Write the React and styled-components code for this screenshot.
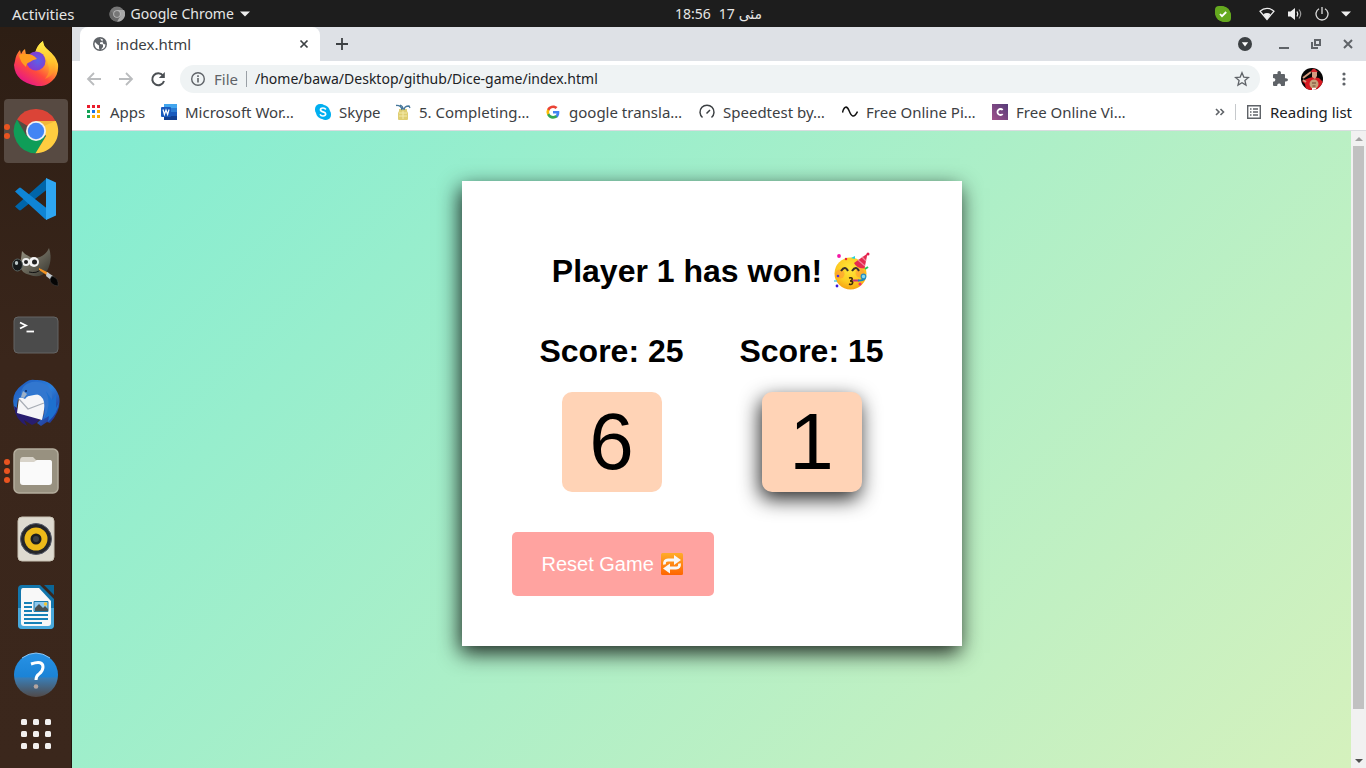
import React from "react";
import styled, { createGlobalStyle } from "styled-components";

const GlobalStyle = createGlobalStyle`
  * { box-sizing: border-box; }
  body { margin: 0; }
  button, input { font: inherit; color: inherit; margin: 0; }
`;

const uiFont = `"Noto Sans", "DejaVu Sans", sans-serif`;

const Desktop = styled.div`
  height: 100vh;
  display: flex;
  flex-direction: column;
  overflow: hidden;
  font-family: ${uiFont};
  font-size: 14px;
  line-height: 20px;
`;

/* ---------- system bar ---------- */
const SystemBar = styled.header`
  flex: none;
  height: 27px;
  display: grid;
  grid-template-columns: 1fr auto 1fr;
  align-items: center;
  padding: 0 15px 0 12px;
  background: #1d1d1d;
  color: #e6e6e6;
`;
const SystemGroup = styled.div`
  display: flex;
  align-items: center;
  justify-content: ${(p) => (p.$end ? "flex-end" : "flex-start")};
  gap: ${(p) => p.$gap}px;
`;
const PlainButton = styled.button`
  display: flex;
  align-items: center;
  justify-content: center;
  gap: ${(p) => p.$gap || 0}px;
  padding: 0;
  border: 0;
  background: none;
  flex: none;
`;
const ActivitiesButton = styled(PlainButton)`
  font-size: 15px;
`;
const Clock = styled.time`
  display: flex;
  gap: 8px;
  padding-left: 74px;
`;
const DateText = styled.span`
  display: flex;
  gap: 4px;
`;

/* ---------- dock ---------- */
const Workspace = styled.div`
  flex: 1;
  min-height: 0;
  display: flex;
`;
const Dock = styled.nav`
  flex: none;
  width: 72px;
  display: flex;
  flex-direction: column;
  align-items: center;
  gap: 4px;
  padding-top: 4px;
  background: linear-gradient(#2d1e14, #3a261b 45%, #3b271c);
  border-right: 1px solid #21150e;
`;
const DockItem = styled.button`
  position: relative;
  flex: none;
  width: 64px;
  height: ${(p) => (p.$short ? 46 : 64)}px;
  display: flex;
  align-items: center;
  justify-content: center;
  padding: 0;
  border: 0;
  border-radius: 4px;
  background: ${(p) => (p.$active ? "#574a42" : "none")};
`;
const RunningDots = styled.span`
  position: absolute;
  left: 0;
  top: 0;
  height: 100%;
  display: flex;
  flex-direction: column;
  justify-content: center;
  gap: 3px;
`;
const RunningDot = styled.i`
  width: 6px;
  height: 6px;
  border-radius: 50%;
  background: #e95420;
`;

/* ---------- browser ---------- */
const Browser = styled.div`
  flex: 1;
  min-width: 0;
  display: flex;
  flex-direction: column;
  background: #fff;
  color: #3c4043;
`;
const TabStrip = styled.div`
  flex: none;
  height: 34px;
  display: flex;
  align-items: stretch;
  padding: 0 10px 0 8px;
  background: #dee1e6;
`;
const Tab = styled.div`
  width: 240px;
  display: flex;
  align-items: center;
  gap: 8px;
  padding: 0 8px 0 12px;
  background: #fff;
  border-radius: 8px 8px 0 0;
  font-size: 15px;
`;
const TabTitle = styled.span`
  flex: 1;
`;
const NewTab = styled(PlainButton)`
  width: 44px;
`;
const WindowControls = styled.div`
  margin-left: auto;
  display: flex;
  align-items: center;
  gap: 16px;
`;
const TabSearchButton = styled(PlainButton)`
  padding-right: 8px;
`;
const Toolbar = styled.div`
  flex: none;
  height: 36px;
  display: flex;
  align-items: center;
  gap: 12px;
  padding: 0 14px 0 12px;
`;
const ToolbarActions = styled.div`
  display: flex;
  align-items: center;
  gap: 13px;
`;
const Omnibox = styled.div`
  flex: 1;
  height: 28px;
  display: flex;
  align-items: center;
  gap: 8px;
  padding: 0 10px;
  border-radius: 14px;
  background: #eff3f4;
`;
const Scheme = styled.label`
  padding-right: 8px;
  border-right: 1px solid #9aa0a6;
  font-size: 15px;
  line-height: 16px;
  color: #5f6368;
`;
const AddressInput = styled.input`
  flex: 1;
  min-width: 0;
  padding: 0;
  border: 0;
  outline: 0;
  background: none;
  color: #202124;
`;
const Bookmarks = styled.div`
  flex: none;
  height: 34px;
  display: flex;
  align-items: center;
  gap: 16px;
  padding: 0 14px 4px;
  border-bottom: 1px solid #dadce0;
  font-size: 15px;
`;
const Bookmark = styled.a`
  display: flex;
  align-items: center;
  gap: 8px;
  color: inherit;
  text-decoration: none;
  white-space: nowrap;
`;
const BookmarkLabel = styled.span`
  width: ${(p) => p.$w}px;
`;
const BookmarkEnd = styled.div`
  margin-left: auto;
  display: flex;
  align-items: center;
  gap: 10px;
`;
const ReadingList = styled(PlainButton)`
  padding-left: 10px;
  border-left: 1px solid #c6c9cc;
  line-height: 16px;
  color: #202124;
  white-space: nowrap;
`;

/* ---------- page ---------- */
const Viewport = styled.div`
  flex: 1;
  min-height: 0;
  display: flex;
`;
const Page = styled.main`
  flex: 1;
  min-width: 0;
  overflow: hidden;
  padding: 50px 20px;
  background: linear-gradient(135deg, #84edd2, #d5f1bd);
  color: #000;
  font-family: "Liberation Sans", Arial, sans-serif;
`;
const Card = styled.section`
  max-width: 500px;
  margin: 0 auto;
  padding: 50px;
  background: #fff;
  box-shadow: -2px 7px 20px rgba(0, 0, 0, 0.85);
`;
const Message = styled.h1`
  display: flex;
  justify-content: center;
  align-items: center;
  gap: 9px;
  margin: 20px 0 40px;
  font-size: 32px;
  line-height: 40px;
`;
const Players = styled.div`
  display: flex;
`;
const Player = styled.div`
  width: 200px;
  display: flex;
  flex-direction: column;
  align-items: center;
  gap: 21px;
`;
const Score = styled.h2`
  margin: 0;
  font-size: 32px;
  line-height: 40px;
`;
const Die = styled.div`
  width: 100px;
  height: 100px;
  border-radius: 10px;
  background: #ffd3b6;
  font-size: 80px;
  line-height: 100px;
  text-align: center;
  box-shadow: ${(p) => (p.$active ? "-2px 7px 20px rgba(0, 0, 0, 0.85)" : "none")};
`;
const ResetButton = styled.button`
  display: flex;
  align-items: center;
  gap: 6px;
  margin-top: 40px;
  padding: 20px 30px;
  border: 0;
  border-radius: 5px;
  background: #ffa3a0;
  color: #fff;
  font-size: 20px;
  line-height: 24px;
`;
const ScrollTrack = styled.div`
  flex: none;
  width: 15px;
  display: flex;
  flex-direction: column;
  background: #f1f1f1;
`;
const ScrollArrow = styled(PlainButton)`
  height: 15px;
`;
const ScrollThumb = styled.div`
  flex: 563;
  margin: 0 2px;
  background: #c1c1c1;
`;
const ScrollRest = styled.div`
  flex: 44;
`;

/* ---------- drawings ---------- */
const Svg = ({ w = 16, h = w, box, children }) => (
  <svg width={w} height={h} viewBox={box || `0 0 ${w} ${h}`} fill="none" aria-hidden="true">
    {children}
  </svg>
);

const Caret = () => (
  <Svg w={10} h={6}><path d="M0 0.5h10L5 5.5z" fill="#eee" /></Svg>
);
const GreyChrome = () => (
  <Svg w={16}>
    <circle cx="8" cy="8" r="7.6" fill="#777" />
    <path d="M8 4h7A7.6 7.6 0 0 1 8 15.6L11.5 10z" fill="#aaa" />
    <path d="M1.4 4.4A7.6 7.6 0 0 0 8 15.6L11 10 5 9z" fill="#686868" />
    <circle cx="8" cy="8" r="3.8" fill="#bcbcbc" />
    <circle cx="8" cy="8" r="2.9" fill="#777" />
  </Svg>
);
const SkypeStatus = () => (
  <Svg w={16}>
    <rect width="11" height="11" rx="4" fill="#65a91f" />
    <rect x="5" y="5" width="11" height="11" rx="4" fill="#65a91f" />
    <circle cx="8" cy="8" r="7.6" fill="#65a91f" />
    <path d="M5 8l2 2.2L11.2 6" stroke="#fff" strokeWidth="1.8" />
  </Svg>
);
const Wifi = () => (
  <Svg w={16} h={14}>
    <path d="M1 4.2C5 .4 11 .4 15 4.2L8 12.5z" stroke="#eee" strokeWidth="1.2" />
    <path d="M4.3 7.2c2.2-1.6 5.2-1.6 7.4 0L8 12.5z" fill="#eee" />
  </Svg>
);
const Volume = () => (
  <Svg w={16} h={14}>
    <path d="M1 4.5h2.6L8 1v12L3.6 9.500H1z" fill="#eee" />
    <path d="M10 4.500q1.600 2.500 0 5" stroke="#eee" strokeWidth="1.300" />
    <path d="M12 2.500q3.400 4.500 0 9" stroke="#999" strokeWidth="1.200" />
  </Svg>
);
const Power = () => (
  <Svg w={14}>
    <path d="M4 1.800a6 6 0 1 0 6 0M7 0v7" stroke="#ddd" strokeWidth="1.300" />
  </Svg>
);

const FirefoxIcon = () => (
  <Svg w={46} h={46}>
    <defs>
      <linearGradient id="ffBody" x1="38" y1="4" x2="10" y2="44" gradientUnits="userSpaceOnUse">
        <stop offset="0" stopColor="#fff44f" /><stop offset=".35" stopColor="#ffb02a" />
        <stop offset=".65" stopColor="#ff4a3d" /><stop offset="1" stopColor="#e3118f" />
      </linearGradient>
      <radialGradient id="ffGlobe" cx=".6" cy=".5" r=".6">
        <stop offset="0" stopColor="#5a62e8" /><stop offset="1" stopColor="#8a35cc" />
      </radialGradient>
      <linearGradient id="ffFlame" x1="0" y1="0" x2="0" y2="1">
        <stop offset="0" stopColor="#fff04a" /><stop offset=".55" stopColor="#ffc22c" /><stop offset="1" stopColor="#ff7a2a" />
      </linearGradient>
    </defs>
    <path d="M2 21Q3 14 7 10l1 4q2-4 4-5l1 6h9q1-9 8-14 0 5 5 9 8 6 10 14 1 11-6 17-7 6-15 5Q2 42 1 25z" fill="url(#ffBody)" />
    <path d="M22 13q2-8 8-12 0 5 5 9 8 7 7 18-2 8-10 11 6-7 3-15-1-7-7-9-3-2-6-2z" fill="url(#ffFlame)" />
    <circle cx="23" cy="21" r="9.500" fill="url(#ffGlobe)" />
    <path d="M6 15q4-2 8-1 6 0 10 5-5 1-7 3-4 1-4 5-6-5-7-12z" fill="#ff9d1f" />
  </Svg>
);
const ChromeIcon = () => (
  <Svg w={46}>
    <path d="M23 23L4 11.500A22.200 22.200 0 0 1 42.500 13z" fill="#db4437" />
    <path d="M4 11.500A22.200 22.200 0 0 0 23 45.200L32.500 28 13.500 28z" fill="#0f9d58" />
    <path d="M23 13h19.800A22.200 22.200 0 0 1 22.500 45.200L33 28z" fill="#ffcd40" />
    <path d="M23 13h19.800l-12 5z" fill="#e9a83a" opacity=".6" />
    <circle cx="23" cy="23" r="10" fill="#f1f1f1" />
    <circle cx="23" cy="23" r="8.200" fill="#4285f4" />
  </Svg>
);
const CodeIcon = () => (
  <Svg w={44}>
    <path d="M1 29.500l4 3.500q1 .8 2 0L33 12.500V1z" fill="#0065a9" />
    <path d="M1 14.500l4-3.500q1-.8 2 0L33 31.500V43L31 42z" fill="#0f85d5" />
    <path d="M32 1l10 4.500v33L32 43z" fill="#2ea6f2" />
  </Svg>
);
const GimpIcon = () => (
  <Svg w={48} h={42}>
    <defs><linearGradient id="gimpFur" x1="0" y1="0" x2="1" y2="1"><stop stopColor="#9a9685" /><stop offset="1" stopColor="#35342d" /></linearGradient></defs>
    <path d="M10 5q5 6 13 7Q33 11 37 2q4 12-2 23-7 8-17 4Q9 27 8 20z" fill="url(#gimpFur)" />
    <circle cx="14" cy="16" r="4" fill="#eee" /><circle cx="22" cy="16" r="5" fill="#f4f4f4" />
    <circle cx="14" cy="16" r="2" fill="#222" /><circle cx="22.500" cy="16" r="2.500" fill="#222" />
    <ellipse cx="5.500" cy="19" rx="5" ry="6" fill="#15191a" stroke="#59625f" />
    <ellipse cx="4.500" cy="17" rx="1.700" ry="2" fill="#b9c4c4" />
    <path d="M17 26q8 2 12-3" stroke="#111" />
    <path d="M27 22l10 5-1 3-9-6z" fill="#f29120" />
    <path d="M35 26l6 4-2 4-5-4z" fill="#c4cad0" />
    <path d="M40 30q7 2 6 10-8-1-8-7z" fill="#050505" stroke="#444" strokeWidth=".5" />
  </Svg>
);
const TerminalIcon = () => (
  <Svg w={46} h={38}>
    <rect x="1" y="1" width="44" height="36" rx="4" fill="#4b4b4b" stroke="#656565" />
    <path d="M7 6.500l6 3-6 3" stroke="#fff" strokeWidth="1.800" />
    <path d="M13.500 15.500H21" stroke="#fff" strokeWidth="1.800" />
  </Svg>
);
const ThunderbirdIcon = () => (
  <Svg w={48}>
    <defs><linearGradient id="tbBlue" x1="0" y1="0" x2="1" y2="1"><stop stopColor="#1e55b7" /><stop offset=".5" stopColor="#2b80dd" /><stop offset="1" stopColor="#20217f" /></linearGradient></defs>
    <path d="M14 3q4-3 9-2 18-1 24 16 3 14-9 27l-3-1-6 4-4-3q8-6 7-14L6 20 4 34Q-4 16 10 6z" fill="url(#tbBlue)" />
    <path d="M2 27q1 14 13 20l-3-6 8 5 4-2 6-6-25-9z" fill="#281d6f" />
    <path d="M7 19l25-5q2 12-2 27L5 34z" fill="#f5f5f7" />
    <path d="M7 20l9 10 16-6" stroke="#a8adb5" strokeWidth="1.200" />
    <path d="M9 18q-1-12 11-15 15-2 20 11 1 15-9 27 3-10 1-18-2-8-10-8-5 0-9 5z" fill="#3277cf" />
    <path d="M34 12q6 13-2 28l5-3-1 6q10-9 11-20l-3 6V15l-4 6z" fill="#1d70cf" />
    <path d="M9 18l2-6 4 3-3 4z" fill="#9db1c8" />
    <circle cx="14" cy="12" r="1" fill="#102c60" />
  </Svg>
);
const FilesIcon = () => (
  <Svg w={46}>
    <rect x="1" y="1" width="44" height="44" rx="5" fill="#989180" stroke="#b4ad9d" strokeWidth="1.500" />
    <path d="M7 13q0-4 3-4h10l3 3h13q3 0 3 3v10H7z" fill="#d8d3c9" />
    <path d="M7 14h14l3-2h13q2 0 2 3v19q0 3-3 3H10q-3 0-3-3z" fill="#fafafa" />
  </Svg>
);
const SpeakerIcon = () => (
  <Svg w={38} h={46}>
    <rect x="1" y="1" width="36" height="44" rx="4" fill="#dedad0" stroke="#c8c1b3" />
    <circle cx="19" cy="23" r="15.500" fill="#25262a" stroke="#555a69" />
    <circle cx="19" cy="23" r="11.500" fill="#edba19" />
    <circle cx="19" cy="23" r="5.500" fill="#1c1e20" /><circle cx="19" cy="23" r="3" fill="#3c4044" />
  </Svg>
);
const WriterIcon = () => (
  <Svg w={38} h={46}>
    <path d="M5 1h18l14 14v26q0 4-4 4H5q-4 0-4-4V5q0-4 4-4z" fill="#1376ac" />
    <path d="M1 24h36v17q0 4-4 4H5q-4 0-4-4z" fill="#48a8db" />
    <path d="M6 4h16l12 13v22q0 3-3 3H7q-3 0-3-3V7q0-3 2-3z" fill="#f8f8f8" />
    <path d="M27 1h10v10z" fill="#0b6697" />
    <path d="M7 19h8M7 23h8M7 27h8M7 31h24M7 35h24M7 39h18" stroke="#1681b8" strokeWidth="2" />
    <path d="M17 17.500h14v10H17z" fill="#8ec9ef" stroke="#187bad" />
    <path d="M18 27v-3l4-4 4 4 2-2 3 3v2z" fill="#4a5152" /><circle cx="28.500" cy="20" r="1.700" fill="#f3c535" />
  </Svg>
);
const HelpIcon = () => (
  <Svg w={46}>
    <defs><linearGradient id="helpBlue" x1="0" y1="0" x2="0" y2="1"><stop stopColor="#2792e5" /><stop offset=".54" stopColor="#1b83d6" /><stop offset=".57" stopColor="#3a7db5" /><stop offset="1" stopColor="#514a49" /></linearGradient></defs>
    <circle cx="23" cy="23" r="22" fill="url(#helpBlue)" />
    <path d="M9 6q14-10 28 0" stroke="#8cc5f3" />
    <path d="M18 12q12-4 12 3 0 4-4 7-3 2-3 6" stroke="#fff" strokeWidth="3" />
    <circle cx="23" cy="34.500" r="2.300" fill="#b4a5a0" />
  </Svg>
);
const AppsGridIcon = () => (
  <Svg w={30}>
    {[0, 12, 24].map((y) => [0, 12, 24].map((x) => (
      <rect key={`${x}-${y}`} x={x} y={y} width="6" height="6" rx="1.500" fill="#f2f0ef" />
    )))}
  </Svg>
);

const GlobeIcon = () => (
  <Svg w={16}>
    <circle cx="8" cy="8" r="7" fill="#5f6368" />
    <path d="M8 2.500l3 1-1 2.500-2 .5v1.500l3 .5v2.500l-2 2.500q4-.5 4.500-5l-2-.5-1-2M3 6l2.500 2.500L7 9.500V12l.5 1.500Q3 13 2.500 8z" fill="#fff" />
  </Svg>
);
const PlusIcon = () => (
  <Svg w={12}><path d="M6 0v12M0 6h12" stroke="#3c4043" strokeWidth="1.800" /></Svg>
);
const TabSearch = () => (
  <Svg w={14}><circle cx="7" cy="7" r="7" fill="#3c4043" /><path d="M3.800 5.200h6.400L7 9.400z" fill="#fff" /></Svg>
);
const TabClose = () => (
  <Svg w={16}><path d="M4.500 4.500l7 7M11.500 4.500l-7 7" stroke="#3c4043" strokeWidth="1.700" /></Svg>
);
const Minimize = () => <Svg w={16}><path d="M3 12h10" stroke="#5f6368" strokeWidth="2" /></Svg>;
const Restore = () => (
  <Svg w={16}><path d="M7 4h5v5H7zM4 6v6h6" stroke="#5f6368" strokeWidth="2" /></Svg>
);
const WindowClose = () => (
  <Svg w={16}><path d="M4 4l8 8M12 4l-8 8" stroke="#5f6368" strokeWidth="2" /></Svg>
);
const Arrow = ({ flip }) => (
  <Svg w={20} h={16}>
    <path d={flip ? "M3 8h13M10 2l6 6-6 6" : "M17 8H4M10 2L4 8l6 6"} stroke="#babcbe" strokeWidth="1.800" />
  </Svg>
);
const Reload = () => (
  <Svg w={20} h={16}>
    <path d="M15 4.500A6 6 0 1 0 16 10" stroke="#4b4f53" strokeWidth="2" /><path d="M16.800 1v6h-6z" fill="#4b4f53" />
  </Svg>
);
const Info = () => (
  <Svg w={16}><circle cx="8" cy="8" r="6.300" stroke="#5f6368" strokeWidth="1.400" /><path d="M8 7v4.500M8 4.300v1.600" stroke="#5f6368" strokeWidth="1.600" /></Svg>
);
const Star = () => (
  <Svg w={16}><path d="M8 1.800l1.800 4.300 4.700.4-3.600 3 1.100 4.600L8 11.700l-4 2.400 1.100-4.600-3.600-3 4.700-.4z" stroke="#5f6368" strokeWidth="1.300" /></Svg>
);
const Puzzle = () => (
  <Svg w={16}><path d="M1 4q0-1 1-1h3.500q-.5-3 1.700-3t1.700 3H12q1 0 1 1v3.200q3-.4 3 1.600t-3 1.600V14q0 1-1 1H9q.2-2.600-1.900-2.600T5.200 15H2q-1 0-1-1v-3.200q2.400 0 2.400-2T1 6.900z" fill="#5f6368" /></Svg>
);
const Avatar = () => (
  <Svg w={22}>
    <defs><clipPath id="avatarClip"><circle cx="11" cy="11" r="11" /></clipPath></defs>
    <g clipPath="url(#avatarClip)">
      <path d="M0 0h22v22H0z" fill="#080606" />
      <path d="M1 13l7-3 4-1 6 1 4 4v8H5l-1-6z" fill="#d81920" />
      <path d="M2 10l8-6M2 12l3 2" stroke="#d49a7e" strokeWidth="2" />
      <path d="M11 4h5v4l-2 3-3-2z" fill="#d59b80" />
      <path d="M10 4q1-4 4-3l3 3z" fill="#d8252c" />
      <circle cx="13" cy="16" r="4.500" fill="#c4a17a" /><path d="M11 15h4M11.500 18h3" stroke="#70442f" />
      <path d="M11 21h4" stroke="#fff" strokeWidth="2" />
    </g>
  </Svg>
);
const Kebab = () => (
  <Svg w={16}>{[3, 8, 13].map((y) => <circle key={y} cx="8" cy={y} r="1.600" fill="#5f6368" />)}</Svg>
);

const AppsIcon = () => (
  <Svg w={16}>
    {["#ea1c2c", "#ea1c2c", "#ea1c2c", "#11a255", "#1a73e8", "#fbab05", "#11a255", "#fbab05", "#fbab05"].map((c, i) => (
      <rect key={i} x={1 + (i % 3) * 5} y={1 + Math.floor(i / 3) * 5} width="3" height="3" fill={c} />
    ))}
  </Svg>
);
const WordIcon = () => (
  <Svg w={16}>
    <path d="M3 0h13v4H3z" fill="#41a5ee" /><path d="M3 4h13v4H3z" fill="#2b7cd3" />
    <path d="M3 8h13v4H3z" fill="#185abd" /><path d="M3 12h13v4H3z" fill="#103f91" />
    <rect y="3" width="10" height="10" rx="1" fill="#185abd" />
    <path d="M2 5.500l1.400 5L5 6l1.600 4.500L8 5.500" stroke="#fff" strokeWidth="1.200" />
  </Svg>
);
const SkypeIcon = () => (
  <Svg w={16}>
    <rect width="11" height="11" rx="5" fill="#00aff0" /><rect x="5" y="5" width="11" height="11" rx="5" fill="#00aff0" />
    <circle cx="8" cy="8" r="7" fill="#00aff0" />
    <path d="M10.800 5.500Q10 4 8 4 5.500 4 5.500 5.800 5.500 7.300 8 7.800t2.700 2.200Q10.500 12 8 12 5.800 12 5.100 10.300" stroke="#fff" strokeWidth="1.700" />
  </Svg>
);
const JarIcon = () => (
  <Svg w={16}>
    <path d="M4 5h8v2l1 2v6q0 1-1 1H4q-1 0-1-1V9l1-2z" fill="#dfce73" />
    <path d="M4 9h8M4 12h8M8 7v8" stroke="#f3e9a9" />
    <path d="M7 6Q6 1 1 1.500M8 5Q8 2 5 1M9 6q0-4 5-4l1 2" stroke="#45769a" strokeWidth="1.300" />
  </Svg>
);
const GoogleIcon = () => (
  <Svg w={16} box="0 0 24 24">
    <path d="M21.500 12.200q0-.8-.2-1.600H12v3.800h5.400c-.3 1.300-1 2.300-2 3v2.800h3.200c1.900-1.800 2.900-4.500 2.900-8z" fill="#4285f4" />
    <path d="M12 22c2.700 0 5-.9 6.600-2.400l-3.200-2.600c-2.900 2-7.500.9-8.900-3.200H3.200v2.700A10 10 0 0 0 12 22z" fill="#34a853" />
    <path d="M6.500 13.900a6 6 0 0 1 0-3.800V7.500H3.200a10 10 0 0 0 0 9z" fill="#fbbc05" />
    <path d="M12 6c1.500 0 2.800.5 3.900 1.500l2.900-2.900C14 .3 6.100 1.800 3.200 7.500l3.300 2.600C7.300 7.700 9.500 6 12 6z" fill="#ea4335" />
  </Svg>
);
const SpeedIcon = () => (
  <Svg w={16}><path d="M3.500 13.500a7 7 0 1 1 9 0M7.500 9.500L11 6" stroke="#3c4043" strokeWidth="1.500" /></Svg>
);
const WaveIcon = () => (
  <Svg w={16}><path d="M.5 8.500C2 2 5 1.500 7 6.500s4.500 9 8.500 1" stroke="#111" strokeWidth="1.500" /></Svg>
);
const CIcon = () => (
  <Svg w={16}>
    <defs><linearGradient id="cPurple" x1="1" y1="0" x2="0" y2="1"><stop stopColor="#553b78" /><stop offset="1" stopColor="#a0528b" /></linearGradient></defs>
    <path d="M0 0h16v16H0z" fill="url(#cPurple)" />
    <path d="M10.700 6A3 3 0 1 0 10.700 10" stroke="#fff" strokeWidth="1.800" />
  </Svg>
);
const ListIcon = () => (
  <Svg w={16}>
    <path d="M1.700 1.700h12.600v12.600H1.700z" stroke="#5f6368" strokeWidth="1.400" />
    <path d="M4 5h1.500M4 8h1.500M4 11h1.500M7 5h5M7 8h5M7 11h5" stroke="#5f6368" strokeWidth="1.500" />
  </Svg>
);
const MoreIcon = () => (
  <Svg w={10} h={8}><path d="M1 1l3 3-3 3M5.500 1l3 3-3 3" stroke="#5f6368" strokeWidth="1.600" /></Svg>
);

const PartyFace = () => (
  <Svg w={40} h={38} box="-2 0 40 38">
    <defs>
      <radialGradient id="faceFill" cx=".5" cy=".35" r=".7"><stop stopColor="#ffe83b" /><stop offset=".6" stopColor="#fdcb22" /><stop offset="1" stopColor="#f59b10" /></radialGradient>
    </defs>
    <circle cx="17.500" cy="21.500" r="16" fill="url(#faceFill)" />
    <circle cx="7" cy="22" r="4.500" fill="#ff8438" opacity=".45" /><circle cx="27" cy="21" r="4.500" fill="#ff8438" opacity=".45" />
    <path d="M8 19q4-6 7 0M19 19q4-6 7 0" stroke="#3b302b" strokeWidth="2" />
    <path d="M16 26q4-1 3 2-1 1-2 1 4 0 2 3-1 1-3 0" stroke="#422b0d" strokeWidth="1.700" />
    <path d="M20 28.500h6" stroke="#c33187" strokeWidth="2" /><path d="M25 28.500q7 0 7-3" stroke="#1785bd" strokeWidth="1.800" />
    <circle cx="30.500" cy="24.500" r="2.300" stroke="#248fc4" strokeWidth="1.200" fill="#8bd9ec" />
    <path d="M21 11L34.500 1.500l-3 15q-8 0-10.500-5.500z" fill="#e52b50" />
    <path d="M25 8l7 6M29 5l4 4" stroke="#f0859a" strokeWidth="1.200" />
    <circle cx="35" cy="2" r="1.500" fill="#e31b4b" />
    <circle cx="6" cy="4" r="1.900" fill="#f516a5" /><path d="M18 6l4-2v3z" fill="#25d3dd" />
    <circle cx="13" cy="7" r="1.200" fill="#e9223d" /><circle cx="5" cy="24" r="1.300" fill="#4a2de2" />
    <circle cx="4" cy="34" r="1.400" fill="#3719dc" /><circle cx="27" cy="32" r="1.500" fill="#f02a78" />
    <path d="M1 29h3" stroke="#57cddc" strokeWidth="1.500" /><path d="M32 17l3-2" stroke="#22c85a" strokeWidth="2" />
  </Svg>
);
const RepeatEmoji = () => (
  <Svg w={24}>
    <defs><linearGradient id="repeatFill" x1="0" y1="0" x2="0" y2="1"><stop stopColor="#ffac2b" /><stop offset="1" stopColor="#ff6500" /></linearGradient></defs>
    <rect x="1" y="1" width="22" height="22" rx="1.500" fill="url(#repeatFill)" />
    <path d="M4.500 12.500Q4 8 8 8h7" stroke="#f8f8f8" strokeWidth="2.800" />
    <path d="M14 3l7 5-7 5z" fill="#f8f8f8" />
    <path d="M19.500 11.500q.5 4.500-3.500 4.500H9" stroke="#f8f8f8" strokeWidth="2.800" />
    <path d="M10 11.500L3 16.500l7 5z" fill="#f8f8f8" />
  </Svg>
);

const dockApps = [
  { name: "Firefox", Icon: FirefoxIcon },
  { name: "Google Chrome", Icon: ChromeIcon, running: 2, active: true },
  { name: "Visual Studio Code", Icon: CodeIcon },
  { name: "GIMP", Icon: GimpIcon },
  { name: "Terminal", Icon: TerminalIcon },
  { name: "Thunderbird", Icon: ThunderbirdIcon },
  { name: "Files", Icon: FilesIcon, running: 3 },
  { name: "Rhythmbox", Icon: SpeakerIcon },
  { name: "LibreOffice Writer", Icon: WriterIcon },
  { name: "Help", Icon: HelpIcon },
  { name: "Show Applications", Icon: AppsGridIcon, short: true },
];

const bookmarks = [
  { label: "Apps", Icon: AppsIcon, w: 35 },
  { label: "Microsoft Wor…", Icon: WordIcon, w: 114 },
  { label: "Skype", Icon: SkypeIcon, w: 40 },
  { label: "5. Completing…", Icon: JarIcon, w: 110 },
  { label: "google transla…", Icon: GoogleIcon, w: 114 },
  { label: "Speedtest by…", Icon: SpeedIcon, w: 103 },
  { label: "Free Online Pi…", Icon: WaveIcon, w: 110 },
  { label: "Free Online Vi…", Icon: CIcon, w: 111 },
];

const players = [
  { score: 25, roll: 6 },
  { score: 15, roll: 1, active: true },
];

export default function App() {
  return (
    <Desktop>
      <GlobalStyle />
      <SystemBar>
        <SystemGroup $gap={34}>
          <ActivitiesButton>Activities</ActivitiesButton>
          <PlainButton $gap={6}><GreyChrome />Google Chrome<Caret /></PlainButton>
        </SystemGroup>
        <Clock><span>18:56</span><DateText><span>17</span><span lang="ur">مئی</span></DateText></Clock>
        <SystemGroup $end $gap={12}>
          <SystemGroup $gap={28}><SkypeStatus /><Wifi /></SystemGroup>
          <Volume /><Power /><Caret />
        </SystemGroup>
      </SystemBar>
      <Workspace>
        <Dock aria-label="Dock">
          {dockApps.map(({ name, Icon, running, active, short }) => (
            <DockItem key={name} aria-label={name} $active={active} $short={short}>
              {running && (
                <RunningDots>{Array.from({ length: running }, (_, i) => <RunningDot key={i} />)}</RunningDots>
              )}
              <Icon />
            </DockItem>
          ))}
        </Dock>
        <Browser>
          <TabStrip>
            <Tab>
              <GlobeIcon /><TabTitle>index.html</TabTitle>
              <PlainButton aria-label="Close tab"><TabClose /></PlainButton>
            </Tab>
            <NewTab aria-label="New tab"><PlusIcon /></NewTab>
            <WindowControls>
              <TabSearchButton aria-label="Search tabs"><TabSearch /></TabSearchButton>
              <PlainButton aria-label="Minimize"><Minimize /></PlainButton>
              <PlainButton aria-label="Restore"><Restore /></PlainButton>
              <PlainButton aria-label="Close window"><WindowClose /></PlainButton>
            </WindowControls>
          </TabStrip>
          <Toolbar>
            <PlainButton aria-label="Back"><Arrow /></PlainButton>
            <PlainButton aria-label="Forward"><Arrow flip /></PlainButton>
            <PlainButton aria-label="Reload"><Reload /></PlainButton>
            <Omnibox>
              <Info />
              <Scheme htmlFor="address">File</Scheme>
              <AddressInput id="address" defaultValue="/home/bawa/Desktop/github/Dice-game/index.html" />
              <PlainButton aria-label="Bookmark this page"><Star /></PlainButton>
            </Omnibox>
            <ToolbarActions>
              <PlainButton aria-label="Extensions"><Puzzle /></PlainButton>
              <PlainButton aria-label="Profile"><Avatar /></PlainButton>
              <PlainButton aria-label="Menu"><Kebab /></PlainButton>
            </ToolbarActions>
          </Toolbar>
          <Bookmarks>
            {bookmarks.map(({ label, Icon, w }) => (
              <Bookmark key={label} href="#"><Icon /><BookmarkLabel $w={w}>{label}</BookmarkLabel></Bookmark>
            ))}
            <BookmarkEnd>
              <PlainButton aria-label="More bookmarks"><MoreIcon /></PlainButton>
              <ReadingList $gap={8}><ListIcon />Reading list</ReadingList>
            </BookmarkEnd>
          </Bookmarks>
          <Viewport>
            <Page>
              <Card>
                <Message>Player 1 has won! <PartyFace /></Message>
                <Players>
                  {players.map(({ score, roll, active }) => (
                    <Player key={score}>
                      <Score>Score: {score}</Score>
                      <Die $active={active}>{roll}</Die>
                    </Player>
                  ))}
                </Players>
                <ResetButton>Reset Game <RepeatEmoji /></ResetButton>
              </Card>
            </Page>
            <ScrollTrack>
              <ScrollArrow aria-label="Scroll up"><Svg w={8} h={4}><path d="M0 4l4-4 4 4z" fill="#a3a3a3" /></Svg></ScrollArrow>
              <ScrollThumb />
              <ScrollRest />
              <ScrollArrow aria-label="Scroll down"><Svg w={8} h={4}><path d="M0 0l4 4 4-4z" fill="#505050" /></Svg></ScrollArrow>
            </ScrollTrack>
          </Viewport>
        </Browser>
      </Workspace>
    </Desktop>
  );
}
